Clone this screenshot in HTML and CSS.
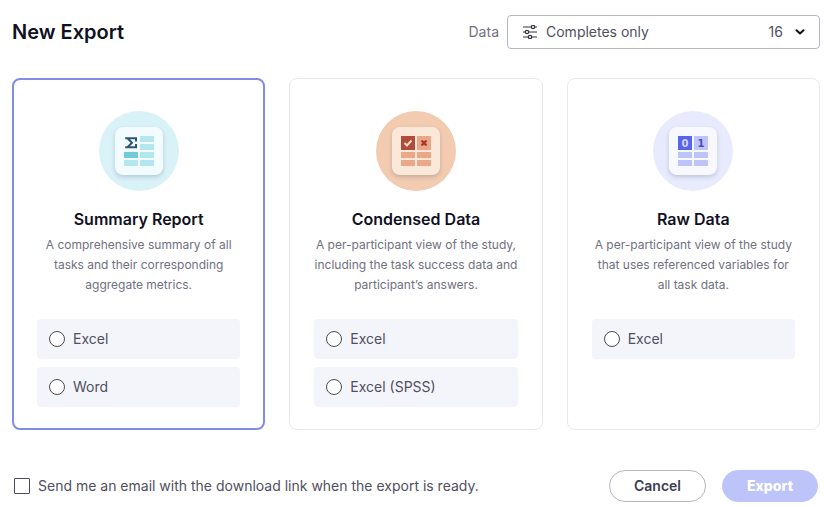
FILE: index.html
```html
<!DOCTYPE html>
<html lang="en">
<head>
  <meta charset="UTF-8">
  <meta name="viewport" content="width=device-width, initial-scale=1.0">
  <title>New Export</title>
  <link rel="stylesheet" href="styles.css">
</head>
<body>
  <form class="export">
    <header class="export-header">
      <h1>New Export</h1>
      <div class="data-filter">
        <label for="data">Data</label>
        <div class="select-box">
          <svg width="14" height="14" viewBox="0 0 14 14" fill="none" stroke="#33333f" stroke-width="1.2">
            <path d="M0 2h8M12 2h2M0 7h2M6 7h8M0 12h5M9 12h5"/>
            <circle cx="10" cy="2" r="1.7"/>
            <circle cx="4" cy="7" r="1.7"/>
            <circle cx="7" cy="12" r="1.7"/>
          </svg>
          <select id="data">
            <option>Completes only</option>
            <option>All participants</option>
          </select>
          <span class="count">16</span>
          <svg width="10" height="6" viewBox="0 0 10 6" fill="none" stroke="#11111c" stroke-width="2" stroke-linecap="round" stroke-linejoin="round">
            <path d="M1.5 1.2L5 4.5l3.5-3.3"/>
          </svg>
        </div>
      </div>
    </header>

    <div class="cards">
      <section class="card selected">
        <div class="badge badge-summary">
          <div class="tile">
            <svg width="30" height="30" viewBox="0 0 30 30">
              <path fill="none" stroke="#2f5575" stroke-width="2" d="M12 5.500V2.200H3.500L8 6.700 3.500 11.200H12V8M1.200 2.200H5M1.200 11.200H5"/>
              <path fill="#b4e6ef" d="M16 0h14v6H16zM16 8h14v6H16zM16 16h14v6H16zM16 24h14v6H16zM0 24h14v6H0z"/>
              <path fill="#72cbd9" d="M0 16h14v6H0z"/>
            </svg>
          </div>
        </div>
        <h2>Summary Report</h2>
        <p>A comprehensive summary of all tasks and their corresponding aggregate metrics.</p>
        <div class="options">
          <label><input type="radio" name="format" value="summary-excel"> Excel</label>
          <label><input type="radio" name="format" value="summary-word"> Word</label>
        </div>
      </section>

      <section class="card">
        <div class="badge badge-condensed">
          <div class="tile">
            <svg width="30" height="30" viewBox="0 0 30 30">
              <path fill="#b04c3b" d="M0 0h14v14H0z"/>
              <path fill="#eba888" d="M16 0h14v14H16zM0 16h14v6H0zM16 16h14v6H16zM0 24h14v6H0zM16 24h14v6H16z"/>
              <path fill="none" stroke="#fbdcc7" stroke-width="2" d="M3.500 7l2.500 2.500 4.500-5"/>
              <path fill="none" stroke="#a93a31" stroke-width="2.400" d="M20.500 4.500l5 5M25.500 4.500l-5 5"/>
            </svg>
          </div>
        </div>
        <h2>Condensed Data</h2>
        <p>A per-participant view of the study, including the task success data and participant’s answers.</p>
        <div class="options">
          <label><input type="radio" name="format" value="condensed-excel"> Excel</label>
          <label><input type="radio" name="format" value="condensed-spss"> Excel (SPSS)</label>
        </div>
      </section>

      <section class="card">
        <div class="badge badge-raw">
          <div class="tile">
            <svg width="30" height="30" viewBox="0 0 30 30">
              <path fill="#5765ed" d="M0 0h14v14H0z"/>
              <path fill="#bdc4fa" d="M16 0h14v14H16zM0 16h14v6H0zM16 16h14v6H16zM0 24h14v6H0zM16 24h14v6H16z"/>
              <text class="digit" x="7" y="11" fill="#d5d9ff">0</text>
              <text class="digit" x="23" y="11" fill="#4b50b5">1</text>
            </svg>
          </div>
        </div>
        <h2>Raw Data</h2>
        <p>A per-participant view of the study that uses referenced variables for all task data.</p>
        <div class="options">
          <label><input type="radio" name="format" value="raw-excel"> Excel</label>
        </div>
      </section>
    </div>

    <footer class="export-footer">
      <label class="notify"><input type="checkbox" name="notify"> Send me an email with the download link when the export is ready.</label>
      <div class="actions">
        <button type="button" class="btn">Cancel</button>
        <button type="submit" class="btn btn-primary" disabled>Export</button>
      </div>
    </footer>
  </form>
</body>
</html>
```

FILE: styles.css
```css
* {
  box-sizing: border-box;
}
body {
  margin: 0;
  padding: 15px 4px 4px 12px;
  background: #fff;
  color: #50505f;
  font-family: Inter, sans-serif;
  font-size: 14px;
  line-height: 20px;
}
.export-header {
  display: flex;
  align-items: center;
  justify-content: space-between;
  margin-bottom: 29px;
}
h1 {
  margin: 0;
  color: #11111f;
  font-size: 20px;
  font-weight: 600;
  line-height: 28px;
}
.data-filter {
  display: flex;
  align-items: center;
  gap: 8px;
  color: #70707f;
}
.select-box {
  display: flex;
  align-items: center;
  width: 313px;
  height: 34px;
  padding: 0 14px 0 15px;
  border: 1px solid #b6b6c2;
  border-radius: 4px;
  color: #50505f;
}
.select-box select {
  flex: 1;
  height: 32px;
  padding: 0 9px;
  border: none;
  background: none;
  color: inherit;
  font: inherit;
  appearance: none;
}
.count {
  margin-right: 12px;
}
.cards {
  display: grid;
  grid-template-columns: repeat(3, 1fr);
  gap: 24px;
}
.card {
  display: flex;
  flex-direction: column;
  align-items: center;
  padding: 32px 24px 22px;
  border: 1px solid #e9e9ef;
  border-radius: 8px;
  text-align: center;
}
.card.selected {
  padding: 31px 23px 21px;
  border: 2px solid #808de6;
}
.badge {
  display: flex;
  align-items: center;
  justify-content: center;
  width: 80px;
  height: 80px;
  border-radius: 50%;
}
.badge-summary {
  background: #d8f2f7;
}
.badge-condensed {
  background: #f2cbb0;
}
.badge-raw {
  background: #e8ebfd;
}
.tile {
  display: flex;
  align-items: center;
  justify-content: center;
  width: 48px;
  height: 48px;
  border-radius: 8px;
  background: #f2fbfd;
  box-shadow: 0 2px 4px rgba(40, 50, 80, 0.2);
}
.badge-condensed .tile {
  background: #fce8d9;
}
.badge-raw .tile {
  background: #f8f9ff;
}
.digit {
  font-family: "DejaVu Sans", sans-serif;
  font-size: 10px;
  font-weight: bold;
  text-anchor: middle;
}
h2 {
  margin: 16px 0 4px;
  color: #11111f;
  font-size: 16px;
  font-weight: 600;
  line-height: 24px;
}
.card p {
  margin: 0 0 24px;
  color: #70707f;
  font-size: 12px;
}
.options {
  display: flex;
  flex-direction: column;
  gap: 8px;
  width: 100%;
}
.options label {
  display: flex;
  align-items: center;
  gap: 8px;
  height: 40px;
  padding: 0 12px;
  border-radius: 4px;
  background: #f4f5fa;
}
input[type="radio"],
input[type="checkbox"] {
  width: 16px;
  height: 16px;
  margin: 0;
  border: 1px solid #4a4a5a;
  border-radius: 50%;
  background: #fff;
  appearance: none;
}
input[type="checkbox"] {
  border-radius: 1px;
}
input:checked {
  background: #5765ed;
}
.export-footer {
  display: flex;
  align-items: center;
  justify-content: space-between;
  margin-top: 40px;
  padding: 0 2px;
}
.notify {
  display: flex;
  align-items: center;
  gap: 8px;
}
.actions {
  display: flex;
  gap: 16px;
}
.btn {
  height: 32px;
  padding: 0 24px;
  border: 1px solid #b6b6c2;
  border-radius: 16px;
  background: #fff;
  color: #3d3d50;
  font: inherit;
  font-weight: 600;
}
.btn-primary {
  border-color: #bdc4fa;
  background: #bdc4fa;
  color: #fff;
  font-weight: 800;
}
```
